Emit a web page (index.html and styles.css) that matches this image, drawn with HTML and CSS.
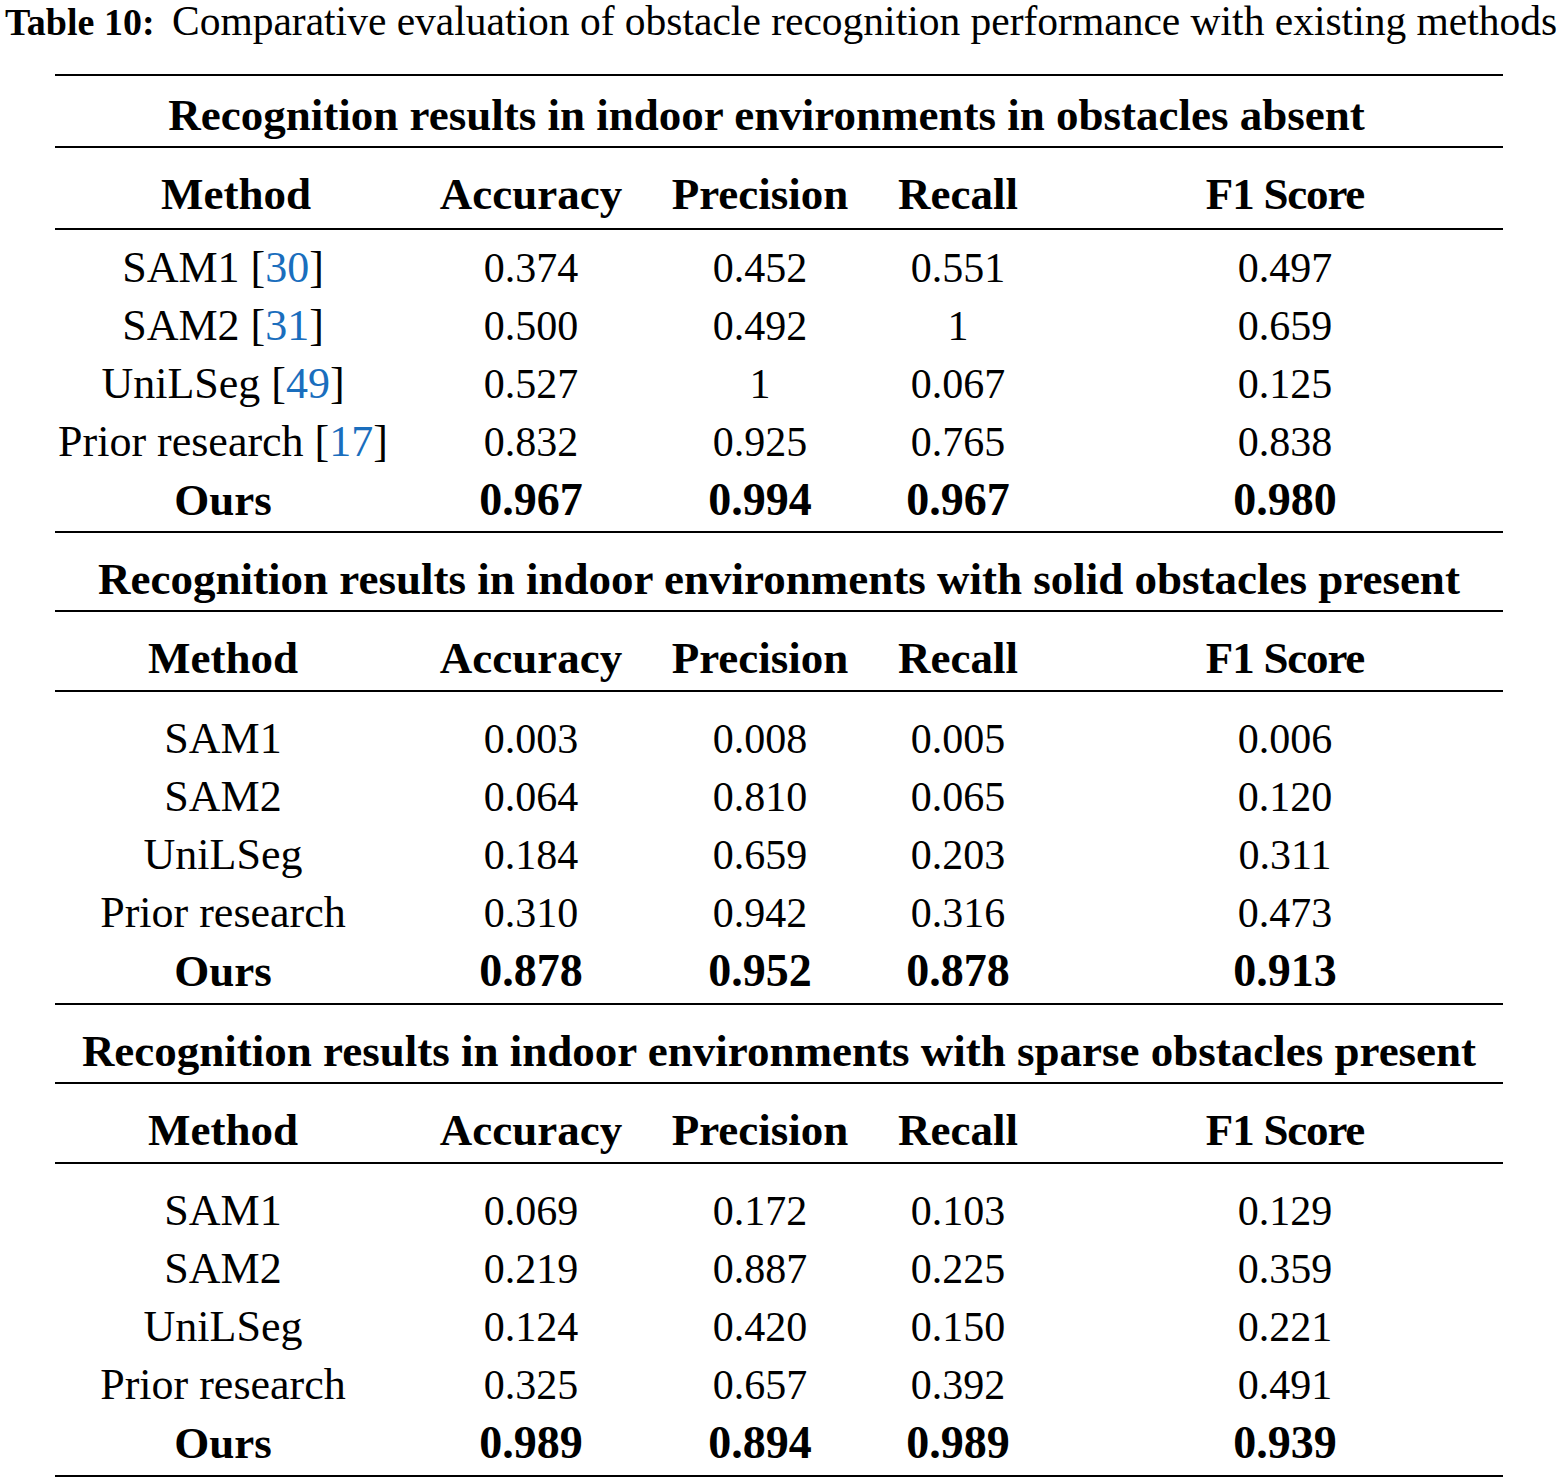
FILE: index.html
```html
<!DOCTYPE html>
<html>
<head>
<meta charset="utf-8">
<link rel="stylesheet" href="styles.css">
</head>
<body>
<div class="caption"><b class="label">Table 10:</b> Comparative evaluation of obstacle recognition performance with existing methods</div>
<div class="table">
  <section class="sec first">
    <div class="sec-title">Recognition results in indoor environments in obstacles absent</div>
    <div class="row head"><div class="m shift">Method</div><div>Accuracy</div><div>Precision</div><div>Recall</div><div class="f1">F1 Score</div></div>
    <div class="body">
      <div class="row"><div class="m">SAM1 [<span class="ref">30</span>]</div><div>0.374</div><div>0.452</div><div>0.551</div><div>0.497</div></div>
      <div class="row"><div class="m">SAM2 [<span class="ref">31</span>]</div><div>0.500</div><div>0.492</div><div>1</div><div>0.659</div></div>
      <div class="row"><div class="m">UniLSeg [<span class="ref">49</span>]</div><div>0.527</div><div>1</div><div>0.067</div><div>0.125</div></div>
      <div class="row"><div class="m">Prior research [<span class="ref">17</span>]</div><div>0.832</div><div>0.925</div><div>0.765</div><div>0.838</div></div>
      <div class="row best"><div class="m">Ours</div><div>0.967</div><div>0.994</div><div>0.967</div><div>0.980</div></div>
    </div>
  </section>
  <section class="sec">
    <div class="sec-title">Recognition results in indoor environments with solid obstacles present</div>
    <div class="row head"><div class="m">Method</div><div>Accuracy</div><div>Precision</div><div>Recall</div><div class="f1">F1 Score</div></div>
    <div class="body">
      <div class="row"><div class="m">SAM1</div><div>0.003</div><div>0.008</div><div>0.005</div><div>0.006</div></div>
      <div class="row"><div class="m">SAM2</div><div>0.064</div><div>0.810</div><div>0.065</div><div>0.120</div></div>
      <div class="row"><div class="m">UniLSeg</div><div>0.184</div><div>0.659</div><div>0.203</div><div>0.311</div></div>
      <div class="row"><div class="m">Prior research</div><div>0.310</div><div>0.942</div><div>0.316</div><div>0.473</div></div>
      <div class="row best"><div class="m">Ours</div><div>0.878</div><div>0.952</div><div>0.878</div><div>0.913</div></div>
    </div>
  </section>
  <section class="sec">
    <div class="sec-title">Recognition results in indoor environments with sparse obstacles present</div>
    <div class="row head"><div class="m">Method</div><div>Accuracy</div><div>Precision</div><div>Recall</div><div class="f1">F1 Score</div></div>
    <div class="body">
      <div class="row"><div class="m">SAM1</div><div>0.069</div><div>0.172</div><div>0.103</div><div>0.129</div></div>
      <div class="row"><div class="m">SAM2</div><div>0.219</div><div>0.887</div><div>0.225</div><div>0.359</div></div>
      <div class="row"><div class="m">UniLSeg</div><div>0.124</div><div>0.420</div><div>0.150</div><div>0.221</div></div>
      <div class="row"><div class="m">Prior research</div><div>0.325</div><div>0.657</div><div>0.392</div><div>0.491</div></div>
      <div class="row best"><div class="m">Ours</div><div>0.989</div><div>0.894</div><div>0.989</div><div>0.939</div></div>
    </div>
  </section>
</div>
</body>
</html>
```
FILE: styles.css
```css
*, *::before, *::after {
  box-sizing: border-box;
}
html, body {
  margin: 0;
  padding: 0;
  background: #fff;
}
body {
  font-family: "Liberation Serif", "DejaVu Serif", serif;
  color: #000;
  font-size: 42px;
}
.caption {
  padding: 0 0 0 5px;
  height: 74px;
  line-height: 42px;
  font-size: 41.5px;
  white-space: nowrap;
}
.label {
  font-size: 38px;
  margin-right: 7px;
}
.table {
  margin-left: 55px;
  width: 1448px;
  border-top: 2px solid #000;
}
.sec {
  border-bottom: 2px solid #000;
}
.sec-title {
  font-weight: bold;
  font-size: 45px;
  text-align: center;
  height: 79px;
  line-height: 79px;
  padding-top: 7px;
  border-bottom: 2px solid #000;
  white-space: nowrap;
}
.row {
  display: grid;
  grid-template-columns: 336px 280px 178px 218px 436px;
  text-align: center;
  height: 58px;
  line-height: 58px;
  white-space: nowrap;
}
.row .m {
  font-size: 44px;
}
.head {
  font-weight: bold;
  font-size: 45px;
  height: 80px;
  line-height: 80px;
  padding-top: 6px;
  border-bottom: 2px solid #000;
}
.head .m {
  font-size: 45px;
}
.head .f1 {
  letter-spacing: -1.2px;
}
.body {
  padding: 18px 0 3px;
}
.best {
  font-weight: bold;
  font-size: 46px;
}
.best .m {
  font-size: 45px;
}
.ref {
  color: #1a6ebd;
}
.first .sec-title {
  height: 72px;
  line-height: 72px;
  padding-top: 3px;
  padding-right: 25px;
}
.first .head {
  height: 82px;
  line-height: 82px;
  padding-top: 5px;
}
.first .body {
  padding: 9px 0 2px;
}
.shift {
  padding-left: 26px;
}
```
